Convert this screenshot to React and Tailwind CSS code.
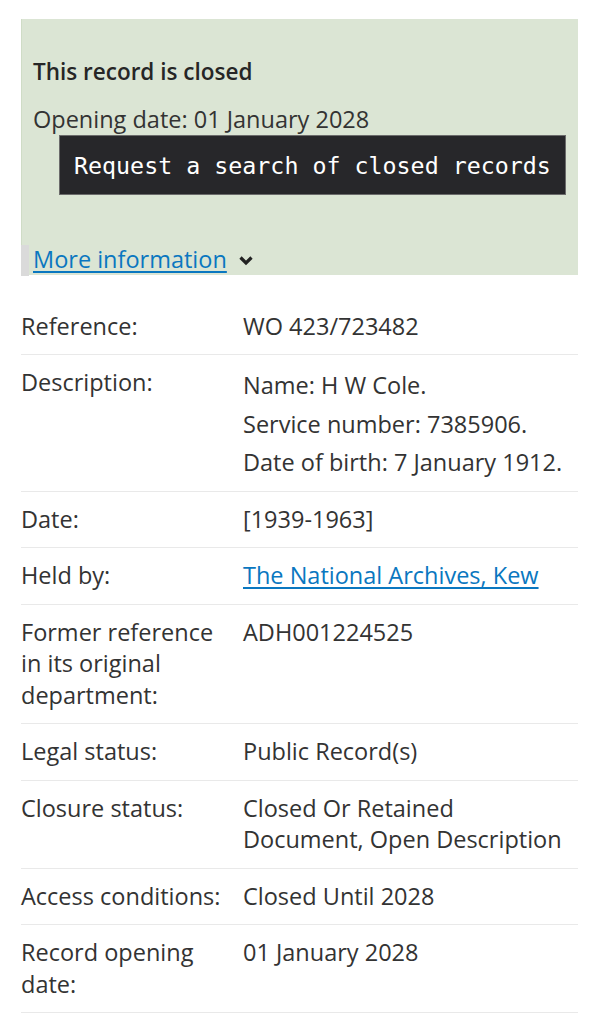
import React from 'react';

const rows = [
  { label: 'Reference:', values: ['WO 423/723482'] },
  {
    label: 'Description:',
    values: ['Name: H W Cole.', 'Service number: 7385906.', 'Date of birth: 7 January 1912.'],
    paragraphs: true
  },
  { label: 'Date:', values: ['[1939-1963]'] },
  { label: 'Held by:', values: ['The National Archives, Kew'], link: true },
  { label: 'Former reference in its original department:', values: ['ADH001224525'] },
  { label: 'Legal status:', values: ['Public Record(s)'] },
  { label: 'Closure status:', values: ['Closed Or Retained Document, Open Description'] },
  { label: 'Access conditions:', values: ['Closed Until 2028'] },
  { label: 'Record opening date:', values: ['01 January 2028'] }
];

const App = () => {
  return (
    <div className="min-h-screen bg-white pl-[21px] pr-[18px] pt-[19px] text-[23.5px] leading-[31.5px] text-[#333333] font-['Open_Sans',sans-serif]">
      {/* Closed record notice */}
      <div className="bg-[#dbe5d4] border-l border-[#cfdcc6] pl-[11px] pr-[12px] pt-[37px]">
        <h2 className="font-semibold text-[22.5px] leading-[31.5px] text-[#262626]">This record is closed</h2>
        <p className="mt-[16px]">Opening date: 01 January 2028</p>
        <div className="flex justify-end">
          <button className="w-[507px] h-[60px] bg-[#27272a] border border-[#6b6b6b] text-white text-[23.3px] font-['DejaVu_Sans_Mono',monospace] text-left pl-[14px] pt-[2px]">
            Request a search of closed records
          </button>
        </div>
        <div className="relative mt-[48.5px] flex items-center">
          <span className="absolute -left-[12px] top-[1px] w-[8px] h-[31px] bg-[#dadada]" />
          <a href="#" className="text-[#0a77c0] underline underline-offset-[3px] decoration-[1.5px] leading-[31.5px]">
            More information
          </a>
          <svg className="ml-[11px] mt-[3px]" width="16" height="12" viewBox="0 0 16 12">
            <path d="M2.5 2.5 L8 8 L13.5 2.5" fill="none" stroke="#222" strokeWidth="3.2" />
          </svg>
        </div>
      </div>

      {/* Details table */}
      <div className="mt-[23.5px]">
        {rows.map((row) => (
          <div key={row.label} className="flex border-b border-[#e9e9e9] py-[12px]">
            <div className="w-[222px] shrink-0 pr-[8px]">{row.label}</div>
            <div className={`flex-1 ${row.paragraphs ? 'flex flex-col gap-[7px] pt-[3px]' : ''}`}>
              {row.values.map((v) =>
                row.link ? (
                  <p key={v}>
                    <a href="#" className="text-[#0a77c0] underline underline-offset-[3px] decoration-[1.5px]">
                      {v}
                    </a>
                  </p>
                ) : (
                  <p key={v}>{v}</p>
                )
              )}
            </div>
          </div>
        ))}
      </div>
    </div>
  );
};

export default App;
